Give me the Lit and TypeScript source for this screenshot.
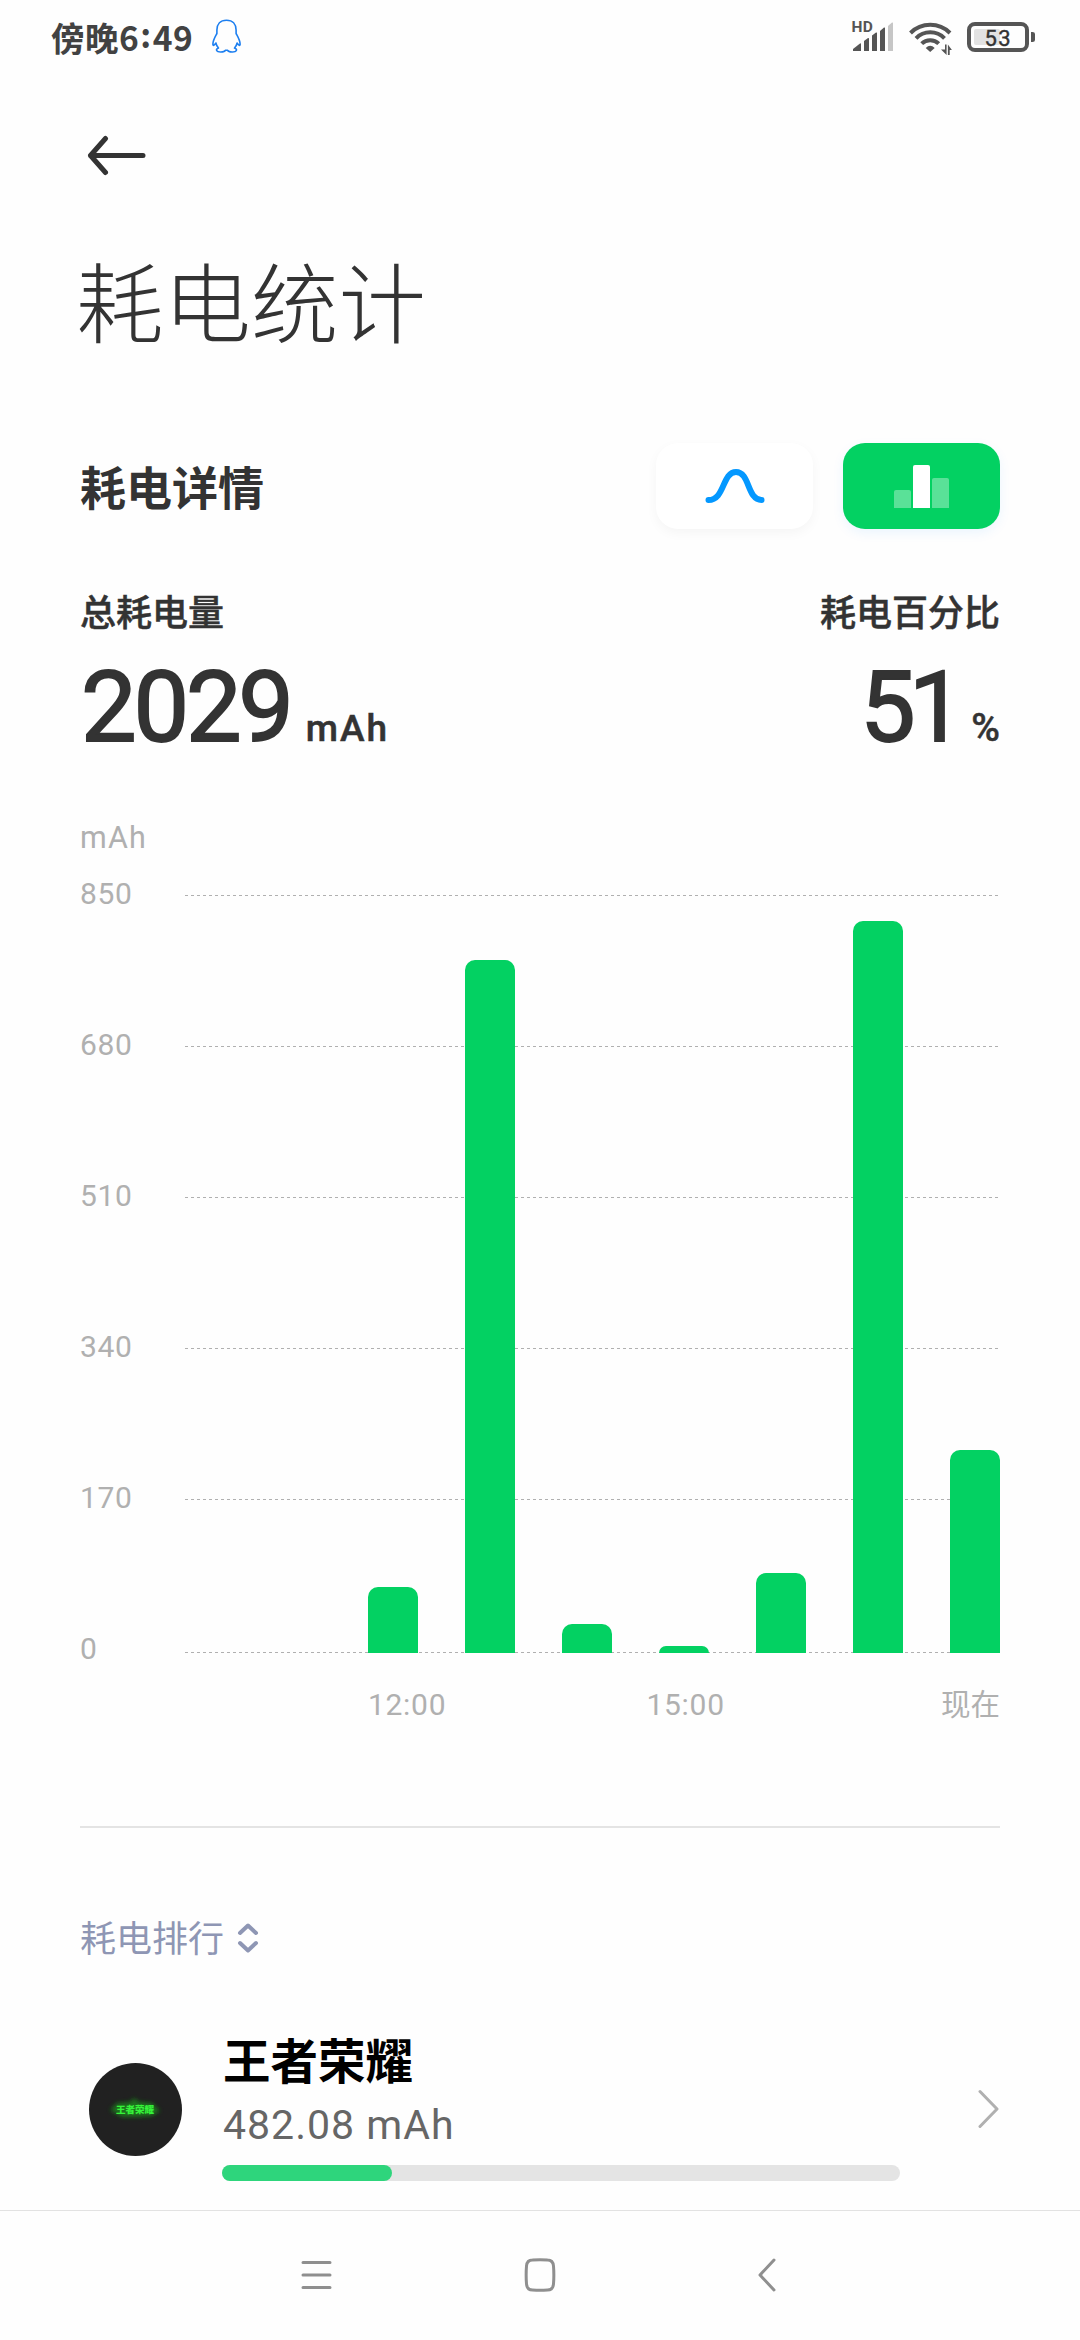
import { LitElement, html, css, svg } from "lit";
import { customElement } from "lit/decorators.js";

interface Bar { mah: number; px: number; }

const LEVELS = [850, 680, 510, 340, 170, 0];
const LINE_OFFSETS = [0, 151, 302, 453, 604, 757];
const BARS: Bar[] = [
  { mah: 74, px: 66 },
  { mah: 778, px: 693 },
  { mah: 32, px: 29 },
  { mah: 8, px: 7 },
  { mah: 90, px: 80 },
  { mah: 822, px: 732 },
  { mah: 228, px: 203 },
];

@customElement("status-bar")
class StatusBar extends LitElement {
  static styles = css`
    :host { display: flex; height: 73px; align-items: center; box-sizing: border-box; padding: 0 40px 0 51px; color: #424242; }
    .time { font-size: 33.5px; font-weight: 700; line-height: 50px; letter-spacing: 0.5px; white-space: nowrap; }
    .colon { vertical-align: 3px; line-height: 0; margin: 0 1px; }
    .qq { margin-left: 19px; }
    .signals { display: flex; margin-left: auto; overflow: visible; }
    svg { display: block; }
    text { font-family: Roboto, sans-serif; }
  `;
  render() {
    return html`
      <span class="time">傍晚6<span class="colon">:</span>49</span>
      <svg class="qq" width="29" height="35" viewBox="0 0 29 35" fill="none" stroke="#1d7ff0" stroke-width="1.6" stroke-linejoin="round">
        <path d="M14.500 1.200C8 1.200 4.900 5.500 4.900 11v3.500C3 18 .9 21.500 .9 25c0 2.200 1.200 1.500 3-1 .4 2 1.300 3.700 2.600 5-1.800.9-2.400 1.600-1.800 2.700 1 1.900 7.600 1.700 8.600-.4h2.400c1 2.100 7.600 2.300 8.600.4.600-1.100 0-1.800-1.800-2.700 1.300-1.300 2.200-3 2.600-5 1.800 2.500 3 3.200 3 1 0-3.500-2.100-7-4-10.500V11c0-5.500-3.100-9.800-9.600-9.800z"/>
      </svg>
      <svg class="signals" width="190" height="73" viewBox="850 0 190 73">
        <text x="851.500" y="32" font-size="15.500" font-weight="700" letter-spacing="0.3" fill="#555">HD</text>
        <g fill="#555">
          <path d="M853 51v-2l7-5.500q1-.5 1 .5v7z"/>
          <path d="M864 51V41l4-3q1-.4 1 .5V51z"/>
          <path d="M872 51V35.500l4-3q1-.4 1 .5v18z"/>
          <path d="M880 51V31l4-3.500q1-.4 1 .5v23z"/>
        </g>
        <path d="M888 51V26l4-3.500q1-.4 1 .5v28z" fill="#c6c6c6"/>
        <g fill="none" stroke="#555" stroke-width="4">
          <path d="M910.500 33a28 28 0 0 1 39.500 0"/>
          <path d="M916 38.300a20 20 0 0 1 28.500 0"/>
          <path d="M921.700 43.700a12 12 0 0 1 17 0"/>
        </g>
        <path d="M930.200 52l-4.500-4q4.500-4.500 9 0z" fill="#555"/>
        <path d="M945 44.500h1.600V55l-5.600-5.500h4zM948.500 55h-.6V44.500l4 5.500h-2.200v5z" fill="#555"/>
        <rect x="969" y="24" width="58" height="26" rx="6" fill="none" stroke="#555" stroke-width="4"/>
        <rect x="974" y="29" width="26" height="16" rx="2" fill="#e2e2e2"/>
        <text x="984.500" y="45.500" font-size="22" font-weight="400" letter-spacing="1.500" fill="#333" stroke="#333" stroke-width=".4">53</text>
        <path d="M1031 32h1.500q2.500 0 2.500 2v6q0 2-2.500 2H1031z" fill="#555"/>
      </svg>
    `;
  }
}

@customElement("usage-chart")
class UsageChart extends LitElement {
  static styles = css`
    :host { display: block; color: #b0b0b0; font-size: 30px; font-family: Roboto, "Noto Sans CJK SC", sans-serif; }
    .unit { line-height: 38px; height: 76px; font-size: 30.5px; letter-spacing: 1.2px; }
    .plot { display: grid; grid-template-columns: 105px 1fr; height: 758px; }
    .levels { display: flex; flex-direction: column; margin-top: -19px; height: 777px; overflow: visible; }
    .level { height: 151px; line-height: 36px; flex: none; letter-spacing: 0.7px; }
    .level:last-child { height: 36px; }
    .area { display: grid; height: 758px; }
    .lines, .bars { grid-area: 1 / 1; }
    .lines { width: 814px; height: 758px; display: block; }
    .bars { display: flex; align-items: flex-end; justify-content: space-between; padding-left: 183px; }
    .bar { width: 50px; background: #03d162; border-radius: 10px 10px 0 0; }
    .times { display: flex; justify-content: space-between; padding: 30px 0 0 288px; line-height: 44px; }
    .time { letter-spacing: 0.7px; }
    .mid { padding-right: 16px; }
    .now { font-size: 29.5px; }
  `;
  render() {
    return html`
      <div class="unit">mAh</div>
      <div class="plot">
        <div class="levels">${LEVELS.map((v) => html`<div class="level">${v}</div>`)}</div>
        <div class="area">
          <svg class="lines" viewBox="0 0 814 758" shape-rendering="crispEdges">
            ${LINE_OFFSETS.map((y) => svg`<path d="M0 ${y + 0.5}H814" stroke="#b0b0b0" stroke-width="1" stroke-dasharray="3 3"/>`)}
          </svg>
          <div class="bars">
            ${BARS.map((b) => html`<div class="bar" style="height:${b.px}px"></div>`)}
          </div>
        </div>
      </div>
      <div class="times"><span class="time">12:00</span><span class="time mid">15:00</span><span class="now">现在</span></div>
    `;
  }
}

@customElement("app-root")
class AppRoot extends LitElement {
  static styles = css`
    :host { display: flex; flex-direction: column; width: 1080px; height: 2340px; overflow: hidden; background: #fefefe; color: #333; font-family: "Noto Sans CJK SC", sans-serif; }
    svg { display: block; }
    main { flex: 1; padding: 0 80px; min-height: 0; overflow: hidden; }
    .back { margin: 62px 0 0 7px; }
    h1 { margin: 58px 0 0 -4px; font-size: 87.5px; line-height: 128px; font-weight: 300; }
    .section { display: flex; align-items: center; height: 86px; margin-top: 80px; }
    h2 { margin: 0; flex: 1; font-size: 46px; line-height: 68px; padding-bottom: 3px; font-weight: 700; }
    .tab { width: 157px; height: 86px; border-radius: 22px; display: flex; align-items: center; justify-content: center; background: #fff; box-shadow: 0 4px 12px rgba(0, 0, 0, 0.04); }
    .tab.on { background: #03d162; margin-left: 30px; box-shadow: 0 4px 12px rgba(0, 140, 255, 0.08); }
    .totals { display: flex; justify-content: space-between; margin-top: 55px; }
    .label { font-size: 36px; line-height: 52px; font-weight: 500; -webkit-text-stroke: 0.5px #333; }
    .value { display: flex; align-items: baseline; height: 117px; margin-top: 13px; font-weight: 500; font-family: Roboto, sans-serif; }
    .right .value { justify-content: flex-end; }
    .num { font-size: 99px; line-height: 117px; font-weight: 400; -webkit-text-stroke: 1.8px #333; letter-spacing: -3.2px; margin-left: 1px; }
    .suffix { font-size: 37px; line-height: 43px; margin-left: 15px; letter-spacing: 2px; -webkit-text-stroke: 0.5px #333; }
    .right .num { letter-spacing: -7px; }
    .right .suffix { font-size: 39px; letter-spacing: 0; margin-left: 14px; }
    usage-chart { margin-top: 53px; }
    hr { border: 0; height: 2px; margin: 99px 0 0; background: #e4e4e4; }
    .rank { display: flex; align-items: center; gap: 13px; margin-top: 82px; font-size: 36px; line-height: 52px; color: #8e96b4; }
    .sort { margin-top: 4px; }
    .app { display: flex; margin-top: 62px; }
    .icon { margin: 39px 0 0 9px; }
    .info { width: 678px; margin-left: 40px; }
    .name { font-size: 47.500px; line-height: 69px; font-weight: 700; color: #000; padding-left: 1px; }
    .used { font-size: 41px; line-height: 48px; margin-top: 8px; color: #666; font-family: Roboto, sans-serif; letter-spacing: 1px; padding-left: 1px; }
    .track { height: 16px; border-radius: 8px; margin-top: 16px; background: #e4e4e4; }
    .fill { height: 16px; border-radius: 8px; background: #2ed57c; }
    .more { margin: 65px 0 0 auto; }
    nav { height: 130px; box-sizing: border-box; border-top: 1px solid #e2e2e2; display: flex; padding: 47px 0 0 301px; }
    .home { margin-left: 192px; }
    .return { margin-left: 201px; }
  `;
  render() {
    return html`
      <status-bar></status-bar>
      <main>
        <svg class="back" width="60" height="42" viewBox="0 0 60 42" fill="none" stroke="#333" stroke-width="5" stroke-linecap="round" stroke-linejoin="round"><path d="M18.500 3.500L3.500 20.500L18.500 37.500M3.500 20.500H56"/></svg>
        <h1>耗电统计</h1>
        <div class="section">
          <h2>耗电详情</h2>
          <div class="tab"><svg width="60" height="36" viewBox="0 0 60 36" fill="none" stroke="#0498ff" stroke-width="6" stroke-linecap="round"><path d="M3.500 32C20 32 17 4 31 4S42 32 56.500 32"/></svg></div>
          <div class="tab on"><svg width="55" height="43" viewBox="0 0 55 43" fill="#fff"><path d="M0 43V27q0-2 2-2h13q2 0 2 2v16z" opacity=".35"/><path d="M19 43V2q0-2 2-2h13q2 0 2 2v41z"/><path d="M38 43V15q0-2 2-2h13q2 0 2 2v28z" opacity=".35"/></svg></div>
        </div>
        <div class="totals">
          <div><div class="label">总耗电量</div><div class="value"><span class="num">2029</span><span class="suffix">mAh</span></div></div>
          <div class="right"><div class="label">耗电百分比</div><div class="value"><span class="num">51</span><span class="suffix">%</span></div></div>
        </div>
        <usage-chart></usage-chart>
        <hr>
        <div class="rank">耗电排行<svg class="sort" width="22" height="30" viewBox="0 0 22 30" fill="none" stroke="#8e96b4" stroke-width="4" stroke-linecap="round" stroke-linejoin="round"><path d="M3 10L11 2.500L19 10M3 20L11 27.500L19 20"/></svg></div>
        <div class="app">
          <svg class="icon" width="93" height="93" viewBox="0 0 93 93">
            <defs><filter id="glow" x="-30%" y="-80%" width="160%" height="260%"><feGaussianBlur stdDeviation="2"/></filter></defs>
            <circle cx="46.500" cy="46.500" r="46.500" fill="#212121"/>
            <path d="M21 47L28 40L41 39L45 35L50 39L63 40L71 48L62 53L46 54L33 54Z" fill="#1c8a1c" opacity=".75" filter="url(#glow)"/>
            <text x="46" y="50" text-anchor="middle" font-size="9.500" font-weight="900" fill="#35f23a">王者荣耀</text>
          </svg>
          <div class="info">
            <div class="name">王者荣耀</div>
            <div class="used">482.08 mAh</div>
            <div class="track"><div class="fill" style="width:170px"></div></div>
          </div>
          <svg class="more" width="22" height="40" viewBox="0 0 22 40" fill="none" stroke="#b0b0b0" stroke-width="3" stroke-linecap="round" stroke-linejoin="round"><path d="M2 2.500L19 20L2 37.500"/></svg>
        </div>
      </main>
      <nav>
        <svg width="31" height="34" viewBox="0 0 31 34" stroke="#8f8f8f" stroke-width="3" stroke-linecap="round"><path d="M2 4.500H29M2 17H29M2 29.500H29"/></svg>
        <svg class="home" width="32" height="34" viewBox="0 0 32 34" fill="none" stroke="#8f8f8f" stroke-width="3"><path d="M8.500 2Q16 1.300 23.500 2Q29 2 29.500 8Q30.200 17 29.500 26Q29 32 23.500 32Q16 32.700 8.500 32Q3 32 2.500 26Q1.800 17 2.500 8Q3 2 8.500 2Z"/></svg>
        <svg class="return" width="20" height="34" viewBox="0 0 20 34" fill="none" stroke="#8f8f8f" stroke-width="3" stroke-linecap="round" stroke-linejoin="round"><path d="M17 2L3 17L17 32"/></svg>
      </nav>
    `;
  }
}
